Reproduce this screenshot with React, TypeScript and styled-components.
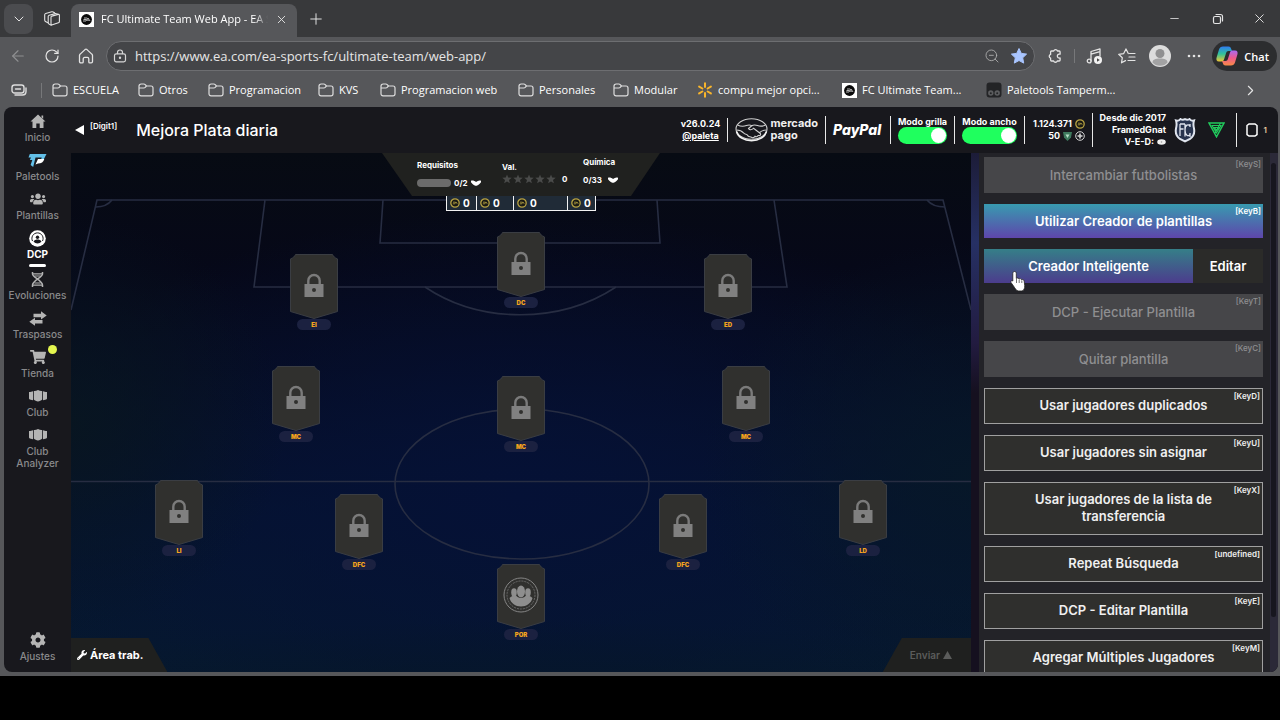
import React from "react";
import styled, { createGlobalStyle, css } from "styled-components";
import { FaCog, FaShoppingCart, FaUsers, FaWrench } from "react-icons/fa";
import {
  ArrowLeft,
  ChevronDown,
  ChevronRight,
  Minus,
  Plus,
  RotateCw,
  X,
  ZoomOut,
} from "lucide-react";

const chromeFont = '"Open Sans", "Noto Sans", sans-serif';
const appFont = 'Inter, "Liberation Sans", sans-serif';

const GlobalStyle = createGlobalStyle`
  *, *::before, *::after { box-sizing: border-box; }
  html, body { margin: 0; background: #000; }
  button, input { font: inherit; color: inherit; }
  button { border: 0; padding: 0; background: none; cursor: pointer; }
  a { color: inherit; text-decoration: none; }
  svg { display: block; flex: none; }
`;

const Screen = styled.div`
  height: 100vh;
  padding-bottom: 44px;
  background: #000;
  color: #fff;
`;

const Browser = styled.div`
  display: flex;
  flex-direction: column;
  height: 100%;
  background: #56575a;
  font-family: ${chromeFont};
  font-size: 11px;
  font-weight: 500;
`;

/* ---------- Browser chrome ---------- */

const TabStrip = styled.div`
  display: flex;
  align-items: center;
  flex: none;
  height: 37px;
  padding-left: 4px;
  background: #38393b;
`;

const IconButton = styled.button<{ $w?: number }>`
  display: flex;
  align-items: center;
  justify-content: center;
  flex: none;
  width: ${(p) => p.$w ?? 34}px;
  height: 30px;
  color: #e4e4e4;
  &:disabled { opacity: 0.4; }
`;

const TabMenuButton = styled(IconButton)`
  border-radius: 8px;
  background: #4b4c4f;
`;

const Tab = styled.div`
  display: flex;
  align-items: center;
  gap: 7px;
  align-self: flex-end;
  width: 226px;
  height: 33px;
  padding: 0 10px 3px 8px;
  border-radius: 8px 8px 0 0;
  background: #56575a;
`;

const TabTitle = styled.span`
  flex: 1;
  overflow: hidden;
  white-space: nowrap;
  line-height: 16px;
  mask-image: linear-gradient(90deg, #000 92%, transparent);
`;

const WindowControls = styled.div`
  display: flex;
  margin-left: auto;
`;

const Toolbar = styled.div`
  display: flex;
  align-items: center;
  flex: none;
  height: 38px;
  padding: 0 3px 0 1px;
`;

const AddressBar = styled.label`
  display: flex;
  align-items: center;
  flex: 1;
  height: 30px;
  margin: 0 1px 0 3px;
  padding: 0 2px 0 6px;
  border: 1px solid #6d6e71;
  border-radius: 15px;
  background: #444548;
`;

const AddressInput = styled.input`
  flex: 1;
  min-width: 0;
  padding: 0 0 0 8px;
  border: 0;
  outline: 0;
  background: none;
  color: #e6e6e6;
  font-size: 13px;
  font-weight: 400;
  line-height: 20px;
`;

const ThinDivider = styled.span<{ $h: number }>`
  flex: none;
  width: 1px;
  height: ${(p) => p.$h}px;
  background: #77787a;
`;

const BookmarkDivider = styled(ThinDivider)`
  margin: 0 10px 0 14px;
`;

const ChatButton = styled.button`
  display: flex;
  align-items: center;
  gap: 6px;
  height: 30px;
  margin-left: 3px;
  padding: 0 8px 0 4px;
  border-radius: 15px;
  background: #2c2d2f;
  font-weight: 600;
`;

const Bookmarks = styled.nav`
  display: flex;
  align-items: center;
  flex: none;
  height: 32px;
  padding: 0 21px 2px 11px;
`;

const Bookmark = styled.a<{ $w: number }>`
  display: flex;
  align-items: center;
  gap: 5px;
  flex: none;
  width: ${(p) => p.$w}px;
  white-space: nowrap;
  line-height: 16px;
`;

const MoreBookmarks = styled(IconButton)`
  margin-left: auto;
`;

/* ---------- App shell ---------- */

const WebApp = styled.div`
  display: flex;
  flex: 1;
  min-height: 0;
  margin: 0 2px 4px 4px;
  border-radius: 8px;
  overflow: hidden;
  background: #18181d;
  font-family: ${appFont};
`;

const Sidebar = styled.nav`
  display: flex;
  flex-direction: column;
  flex: none;
  width: 67px;
  padding: 4px 0 10px;
`;

const NavItem = styled.a<{ $active?: boolean; $last?: boolean }>`
  position: relative;
  display: flex;
  flex-direction: column;
  align-items: center;
  padding: 0 5px 7px;
  color: #8a8a8c;
  font-size: 10px;
  line-height: 12px;
  text-align: center;
  ${(p) => p.$last && css`margin-top: auto; padding-bottom: 0;`}
  ${(p) => p.$active && css`color: #fff; font-weight: 700; padding-bottom: 2px;`}
`;

const NavIcon = styled.span`
  display: grid;
  place-items: center;
  height: 20px;
  color: #b4b4b4;
`;

const ActiveBar = styled.span`
  width: 17px;
  height: 3px;
  margin-top: 4px;
  border-radius: 2px;
  background: #fff;
`;

const Dot = styled.span`
  position: absolute;
  top: -2px;
  right: 14px;
  width: 9px;
  height: 9px;
  border-radius: 50%;
  background: #e4f64f;
`;

const Main = styled.main`
  display: flex;
  flex-direction: column;
  flex: 1;
  min-width: 0;
`;

const Header = styled.header`
  display: flex;
  align-items: center;
  flex: none;
  height: 46px;
  padding-left: 4px;
`;

const BackButton = styled.button`
  display: flex;
  align-items: center;
  gap: 6px;
`;

const KeyHint = styled.span`
  font-size: 8px;
  line-height: 10px;
`;

const BackHint = styled(KeyHint)`
  padding-bottom: 8px;
  font-weight: 600;
`;

const Title = styled.h1`
  margin: 0 0 0 19px;
  padding-bottom: 1px;
  font-size: 16px;
  line-height: 20px;
  font-weight: 500;
`;

const HeaderInfo = styled.div`
  display: flex;
  align-items: center;
  gap: 7px;
  margin-left: auto;
`;

const Rule = styled.span<{ $h?: number }>`
  width: 1px;
  height: ${(p) => p.$h ?? 28}px;
  background: #e8e8e8;
`;

const InfoText = styled.div<{ $w: number; $align?: string }>`
  width: ${(p) => p.$w}px;
  white-space: nowrap;
  display: flex;
  flex-direction: column;
  align-items: ${(p) => p.$align ?? "center"};
  font-size: 9px;
  line-height: 12px;
  font-weight: 700;
  a { text-decoration: underline; }
`;

const Inline = styled.span`
  display: flex;
  align-items: center;
  gap: 3px;
`;

const ToggleLabel = styled.label<{ $w: number }>`
  display: flex;
  flex-direction: column;
  align-items: center;
  width: ${(p) => p.$w}px;
  white-space: nowrap;
  font-size: 9px;
  line-height: 11px;
  font-weight: 700;
`;

const Toggle = styled.input`
  appearance: none;
  width: 100%;
  height: 17px;
  margin: 0;
  padding: 1px;
  border-radius: 9px;
  background: #1fff5e;
  &::before {
    content: "";
    display: block;
    width: 15px;
    height: 15px;
    margin-left: auto;
    border-radius: 50%;
    background: #fff;
  }
`;

const MercadoText = styled.span`
  display: flex;
  flex-direction: column;
  padding-bottom: 3px;
  font-size: 11px;
  line-height: 12px;
  font-weight: 700;
  color: #f0f0f0;
`;

const PayPalText = styled.span`
  width: 50px;
  font-size: 14px;
  line-height: 16px;
  font-weight: 800;
  font-style: italic;
`;

const Badges = styled.div`
  display: flex;
  align-items: center;
  gap: 12px;
  padding: 0 4px 0 1px;
`;

const Unassigned = styled.button`
  display: flex;
  align-items: center;
  justify-content: flex-end;
  gap: 6px;
  width: 23px;
  margin-right: 11px;
  font-size: 8px;
  font-weight: 600;
  color: #e8c9a0;
`;

const Body = styled.div`
  display: flex;
  flex: 1;
  min-height: 0;
`;

/* ---------- Pitch ---------- */

const Pitch = styled.section`
  position: relative;
  flex: 1;
  min-width: 0;
  overflow: hidden;
  background:
    radial-gradient(ellipse 30% 45% at 100% 62%, rgba(7, 24, 40, 0.9), transparent),
    radial-gradient(ellipse 24% 40% at 0% 52%, rgba(8, 22, 32, 0.9), transparent),
    radial-gradient(ellipse 70% 22% at 50% 112%, rgba(6, 22, 36, 0.9), transparent),
    radial-gradient(ellipse 60% 55% at 50% 66%, #051136, transparent),
    linear-gradient(180deg, #070b13 0%, #060818 22%, #060b20 42%, #051430 70%, #06192f 100%);
`;

const PitchLines = styled.svg`
  position: absolute;
  inset: 0;
  width: 100%;
  height: 100%;
`;

const Overlay = styled.div`
  position: relative;
  display: flex;
  flex-direction: column;
  align-items: center;
`;

const Requirements = styled.div`
  display: flex;
  gap: 19px;
  width: 278px;
  height: 43px;
  padding: 4px 0 0 35px;
  background: #20211f;
  clip-path: polygon(0 0, 100% 0, 249px 100%, 30px 100%);
  font-size: 8px;
  line-height: 10px;
  font-weight: 700;
`;

const Requirement = styled.div<{ $drop: number; $w: number; $gap?: number }>`
  display: flex;
  flex-direction: column;
  gap: ${(p) => p.$gap ?? 8}px;
  width: ${(p) => p.$w}px;
  padding-top: ${(p) => p.$drop}px;
  white-space: nowrap;
`;

const Progress = styled.span`
  width: 34px;
  height: 8px;
  border-radius: 4px;
  background: #6b6b6b;
`;

const Stars = styled.span`
  display: flex;
  gap: 1px;
  margin-right: 3px;
  color: #4a4b4a;
`;

const ChemistryValue = styled(Inline)`
  gap: 6px;
`;

const Prices = styled.div`
  display: flex;
  border: 1px solid #f2f2f2;
  border-top: 0;
  background: #202b37;
`;

const Price = styled.span<{ $w: number }>`
  display: flex;
  align-items: center;
  gap: 3px;
  width: ${(p) => p.$w}px;
  height: 14px;
  padding-left: 3px;
  font-size: 10px;
  line-height: 12px;
  font-weight: 700;
  & + & { border-left: 1px solid #f2f2f2; }
`;

const Slot = styled.button<{ $x: number; $y: number }>`
  position: absolute;
  left: ${(p) => p.$x}%;
  top: ${(p) => p.$y}%;
  display: flex;
  flex-direction: column;
  align-items: center;
  width: 48px;
  margin-left: -24px;
`;

const Position = styled.span`
  width: 34px;
  height: 11px;
  border-radius: 6px;
  background: #1b2140;
  color: #f5a51d;
  font-size: 6px;
  line-height: 11px;
  font-weight: 900;
  text-align: center;
`;

const Corner = styled.button<{ $side: "left" | "right" }>`
  position: absolute;
  bottom: 0;
  ${(p) => p.$side}: 0;
  display: flex;
  align-items: center;
  gap: 3px;
  height: 34px;
  background: #1f201f;
  white-space: nowrap;
  ${(p) =>
    p.$side === "left"
      ? css`
          padding: 0 24px 0 6px;
          clip-path: polygon(0 0, calc(100% - 19px) 0, 100% 100%, 0 100%);
          font-size: 11px;
          font-weight: 700;
        `
      : css`
          padding: 0 19px 0 27px;
          clip-path: polygon(19px 0, 100% 0, 100% 100%, 0 100%);
          color: #5b5c5b;
          font-size: 10px;
          font-weight: 600;
        `}
`;

/* ---------- Action panel ---------- */

const Panel = styled.aside`
  display: flex;
  flex: none;
  width: 307px;
  background: #232328;
`;

const PanelEdge = styled.span`
  width: 8px;
  background: linear-gradient(180deg, #1c1c38 0, #263064 90px, #221b40 190px, #15101f 240px);
`;

const Actions = styled.div`
  display: flex;
  flex-direction: column;
  flex: 1;
  gap: 11px;
  overflow: hidden;
  padding: 4px 7px 0 5px;
`;

const Action = styled.button<{ $kind: "disabled" | "primary" | "plain" }>`
  position: relative;
  flex: none;
  width: 100%;
  padding: 8px 40px 9px;
  font-size: 13px;
  line-height: 17px;
  font-weight: 600;
  text-align: center;
  ${(p) =>
    p.$kind === "disabled" &&
    css`
      padding: 10px 40px 9px;
      background: #464649;
      color: #8f8f91;
      font-weight: 500;
    `}
  ${(p) =>
    p.$kind === "primary" &&
    css`
      padding: 9px 40px 8px;
      background: linear-gradient(180deg, #389bb0, #5e46ab);
    `}
  ${(p) =>
    p.$kind === "plain" &&
    css`
      border: 1px solid #a0a0a0;
      background: #2f2f2d;
      color: #f0f0f0;
    `}
`;

const ActionHint = styled(KeyHint)`
  position: absolute;
  top: 2px;
  right: 2px;
`;

const SplitRow = styled.div`
  display: flex;
  flex: none;
`;

const SmartBuilder = styled(Action)`
  flex: 1;
  width: auto;
  padding-left: 0;
  padding-right: 0;
  background: linear-gradient(180deg, #357f88, #4c3c8d);
`;

const EditButton = styled(SmartBuilder)`
  flex: none;
  width: 70px;
  background: #2b2b29;
`;

const Cursor = styled.svg`
  position: absolute;
  left: 26px;
  top: 21px;
  z-index: 1;
`;

const ScrollRail = styled.span`
  width: 8px;
  padding: 10px 2px 55px 1px;
  background: #2b2938;
  &::before {
    content: "";
    display: block;
    height: 100%;
    border-radius: 3px;
    background: #17161f;
  }
`;

/* ---------- Icons ---------- */

const stroke = {
  fill: "none",
  stroke: "currentColor",
  strokeLinecap: "round" as const,
  strokeLinejoin: "round" as const,
};

const Folder = () => (
  <svg width="16" height="16" viewBox="0 0 16 16" {...stroke} stroke="#dedede" strokeWidth="1.2">
    <path d="M1 4.2C1 2.8 1.8 2 3.200 2h2.600c.6 0 1 .2 1.400.6L8.500 4H13c1.300 0 2 .8 2 2v5.700c0 1.300-.8 2.100-2.100 2.100H3.100C1.800 13.800 1 13 1 11.700zM1 6h4.800c.6 0 1-.2 1.400-.6L8.500 4" />
  </svg>
);

const EaIcon = () => (
  <svg width="15" height="15" viewBox="0 0 15 15">
    <rect width="15" height="15" fill="#fff" />
    <circle cx="7.500" cy="7.500" r="5.400" fill="#0a0a0a" />
    <path d="M5 6h3.200M4.500 7.500h3M4 9h3l2-3 2 3M8 8.200h2" stroke="#fff" strokeWidth=".7" fill="none" />
  </svg>
);

const Spark = () => (
  <svg width="16" height="16" viewBox="0 0 16 16" stroke="#f8b52c" strokeWidth="2" strokeLinecap="round">
    <path d="M8 1.200v3.800M8 11v3.800M2.100 4.600l3.300 1.900M10.600 9.500l3.300 1.900M2.100 11.400l3.300-1.900M10.600 6.500l3.300-1.900" />
  </svg>
);

const Tampermonkey = () => (
  <svg width="16" height="16" viewBox="0 0 16 16">
    <rect x=".5" y=".5" width="15" height="15" rx="3" fill="#232426" />
    <circle cx="4.800" cy="11" r="2.700" fill="#5c5d5f" />
    <circle cx="11.200" cy="11" r="2.700" fill="#5c5d5f" />
    <circle cx="4.800" cy="11.200" r="1" fill="#232426" />
    <circle cx="11.200" cy="11.200" r="1" fill="#232426" />
  </svg>
);

const WorkspacesIcon = () => (
  <svg width="18" height="18" viewBox="0 0 18 18" {...stroke} strokeWidth="1.100">
    <path d="M8 7.200c0-.6.300-.9.900-1.100l6.200-1.700c.8-.2 1.300.2 1.300.9v6.200c0 .7-.4 1.100-1 1.300l-6 2c-.9.3-1.400-.1-1.400-.9z" />
    <path d="M8.200 15.200 6 14c-.6-.4-.8-.8-.8-1.500V6.600c0-.7.3-1.100 1-1.300l6-1.700c.5-.1.900-.1 1.300.1l1.500.6" />
    <path d="m4.800 12.700-2.300-1.200c-.6-.3-.8-.8-.8-1.400V4.800c0-.7.300-1.100 1-1.300l6.100-1.700c.5-.1.900-.1 1.300.1l1.500.8" />
  </svg>
);

const HomeOutline = () => (
  <svg width="18" height="18" viewBox="0 0 18 18" {...stroke} strokeWidth="1.300">
    <path d="M2.500 8.600c0-.7.2-1.100.7-1.500L8 2.600c.6-.5 1.400-.5 2 0l4.800 4.500c.5.4.7.8.7 1.500v6c0 .8-.5 1.300-1.300 1.300h-1.400c-.6 0-1-.4-1-1V12c0-1-.6-1.600-1.500-1.600H7.700c-.9 0-1.500.6-1.500 1.600v2.900c0 .6-.4 1-1 1H3.800c-.8 0-1.300-.5-1.300-1.300z" />
  </svg>
);

const LockOutline = () => (
  <svg width="14" height="14" viewBox="0 0 14 14" {...stroke} stroke="#d6d6d6" strokeWidth="1.200">
    <rect x="1.500" y="4.800" width="11" height="8" rx="1.800" />
    <path d="M4.500 4.600V3.500a2.500 2.500 0 0 1 5 0v1.100" />
    <circle cx="7" cy="8.800" r=".6" fill="currentColor" />
  </svg>
);

const BlueStar = () => (
  <svg width="18" height="18" viewBox="0 0 18 18">
    <path d="m9 1.500 2.300 4.900 5.300.7-3.900 3.700 1 5.300L9 13.500l-4.700 2.600 1-5.300-3.900-3.700 5.300-.7z" fill="#a9c5ff" stroke="#a9c5ff" strokeLinejoin="round" />
  </svg>
);

const PuzzleIcon = () => (
  <svg width="16" height="16" viewBox="0 0 16 16" {...stroke} strokeWidth="1.300">
    <path d="M4.500 3h2.200a2 2 0 0 1 3.800 0h1.700c.6 0 .9.300.9.900v2.300a2 2 0 1 0 0 3.700v2.200c0 .6-.3.900-.9.900h-1.900a2 2 0 0 1-3.700 0H4.500c-.6 0-.9-.3-.9-.9v-1.900a2 2 0 0 1 0-3.800V3.900c0-.6.300-.9.900-.9z" />
  </svg>
);

const MusicIcon = () => (
  <svg width="17" height="18" viewBox="0 0 17 18" {...stroke} strokeWidth="1.300">
    <path d="M5 14V4.500l9-2.600V9M5 7.200l9-2.600" />
    <circle cx="3.200" cy="14" r="1.900" />
    <circle cx="12" cy="13" r="4" fill="#f2f2f2" stroke="none" />
    <path d="m11 11.200 2.800 1.800-2.800 1.800z" fill="#444" stroke="none" />
  </svg>
);

const FavoritesIcon = () => (
  <svg width="18" height="18" viewBox="0 0 18 18" {...stroke} strokeWidth="1.200">
    <path d="M10.300 6.500 8 1.900 5.700 6.600l-5 .7 3.600 3.500-.8 5 4-2.200M11.500 6.500H17M11 10h6M10 13.500h7" />
  </svg>
);

const Avatar = () => (
  <svg width="22" height="22" viewBox="0 0 22 22">
    <circle cx="11" cy="11" r="11" fill="#dcdcdc" />
    <circle cx="11" cy="8.500" r="4.500" fill="#909091" />
    <path d="M3.500 17.500c0-3 2.800-4 7.500-4s7.500 1 7.500 4c-1.500 2-4.500 3.300-7.500 3.300s-6-1.300-7.500-3.300z" fill="#a2a2a3" />
  </svg>
);

const CopilotIcon = () => (
  <svg width="22" height="20" viewBox="0 0 22 20">
    <defs>
      <linearGradient id="cpA" x1="0" y1="0" x2="0" y2="1">
        <stop offset="0" stopColor="#2f7df0" />
        <stop offset=".5" stopColor="#30c39a" />
        <stop offset="1" stopColor="#f2c733" />
      </linearGradient>
      <linearGradient id="cpB" x1="0" y1="0" x2="0" y2="1">
        <stop offset="0" stopColor="#a96af2" />
        <stop offset=".5" stopColor="#ef5a8d" />
        <stop offset="1" stopColor="#f78b45" />
      </linearGradient>
    </defs>
    <path d="M7 .5h5.500c1.800 0 2.200 1 2.700 2.500L16 5h-3.500c-1.400 0-2 .8-2.400 2L8 13.500c-.4 1.300-1 2-2.500 2H3c-2.500 0-3-2-2.400-4L3 3.500C3.600 1.500 5 .5 7 .5z" fill="url(#cpA)" />
    <path d="M15 19.500H9.500c-1.800 0-2.200-1-2.700-2.500L6 15h3.500c1.400 0 2-.8 2.400-2L14 6.500c.4-1.300 1-2 2.500-2H19c2.500 0 3 2 2.400 4L19 16.500c-.6 2-2 3-4 3z" fill="url(#cpB)" />
  </svg>
);

const SplitScreenIcon = () => (
  <svg width="16" height="14" viewBox="0 0 16 14" {...stroke} stroke="#dedede" strokeWidth="1.400">
    <rect x="1" y="2" width="12" height="8" rx="2.500" />
    <path d="M4.500 6h5M4 12h7.500c2.200 0 3.500-1.300 3.500-3.500V5" />
  </svg>
);

const RestoreIcon = () => (
  <svg width="12" height="12" viewBox="0 0 12 12" {...stroke} strokeWidth="1.200">
    <rect x="1.500" y="3.500" width="7" height="7" rx="1.500" />
    <path d="M4 1.500h4.500a2 2 0 0 1 2 2V8" />
  </svg>
);

const HomeSolid = () => (
  <svg width="16" height="15" viewBox="0 0 16 15" fill="currentColor">
    <path d="M8 .5 15.500 7.500h-2V14H9.700V9.500H6.300V14H2.500V7.500h-2l7.500-7zM11.500 1.500h1.700v3.200l-1.700-1.500z" />
  </svg>
);

const PaletoolsIcon = () => (
  <svg width="19" height="15" viewBox="0 0 19 15">
    <path d="M1.800 1H18.500l-2.300 4.400c-.8 1.300-2 2-3.500 2l1-2.800H7.500L5.200 14 2.600 12l1.700-5H1.800L3 4.500H.5z" fill="#62bfe8" />
    <path d="M7.500 11.500 10 6h6.300c-.8 3-3 4.500-6.300 4.500z" fill="#fff" />
  </svg>
);

const DcpIcon = () => (
  <svg width="17" height="17" viewBox="0 0 17 17">
    <circle cx="8.500" cy="8.500" r="8.300" fill="#fff" />
    <path d="M3.500 11a5.600 5.600 0 1 1 10 0" fill="none" stroke="#18181d" strokeWidth="1" />
    <circle cx="8.500" cy="7.200" r="1.700" fill="#18181d" />
    <path d="M4.500 11.500c1-1.500 2.500-2 4-2s3 .5 4 2c-1 1.300-2.500 2-4 2s-3-.7-4-2z" fill="#18181d" />
  </svg>
);

const EvolutionIcon = () => (
  <svg width="13" height="15" viewBox="0 0 13 15" fill="none" stroke="currentColor" strokeWidth="1.500">
    <path d="M1.500 0v2c0 3 10 7 10 11v2M11.500 0v2c0 3-10 7-10 11v2" />
    <path d="M2 1.800h9M3.500 4h6M3.500 11h6M2 13.200h9" strokeWidth="1.200" />
  </svg>
);

const TransferIcon = () => (
  <svg width="18" height="15" viewBox="0 0 18 15" fill="currentColor">
    <path d="M4.500 2.800H12V.2l5.700 4.300L12 8.600V6.300H4.500zM13.500 8.900v3.500H6v2.400L.3 10.700 6 6.800v2.100z" />
  </svg>
);

const ClubIcon = () => (
  <svg width="18" height="12" viewBox="0 0 18 12" fill="currentColor">
    <path d="M4.800 1c1.300.2 2.700-.2 4.200-1 1.500.8 2.900 1.200 4.200 1v8.500c-1 1-2.700 1.700-4.200 2-1.500-.3-3.200-1-4.200-2z" />
    <path d="M0 2c1.500 0 3-.4 4-.8v9L.8 9.500C.3 9.300 0 9 0 8.500zM18 2c-1.500 0-3-.4-4-.8v9l3.200-.7c.5-.2.8-.5.8-1z" />
  </svg>
);

const MercadoPagoIcon = () => (
  <svg width="33" height="24" viewBox="0 0 33 24" fill="none" stroke="#cfcfcf" strokeWidth="1.100">
    <ellipse cx="16.500" cy="11" rx="15.500" ry="10.200" />
    <path d="M1.500 13.500c1.500 5.500 7.500 9.200 15 9.200s13.500-3.700 15-9.200" stroke="#f2f2f2" strokeWidth="1.600" />
    <path d="M2.500 7c3 1.500 6.500 1.500 9 .5 2-.8 3.500-.8 5.500.2M30.500 7c-3 1.500-5.500 1.500-8 .5-3-1-4-1-6 .5l-3 2.500c1 1.800 3 1.500 5-.2l6.500 5c1.500 1.200 0 3-1.800 2M1.500 12c4 0 5.500 1 7 2.800 1 1.800 3.500 1.200 4 2.500.8 2 3 1 4 2 1.500 1 3 0 3.500-1 1.500 1 3 .2 3.200-1.300M31.500 12c-3 0-5 .8-6.800 2.500" />
  </svg>
);

const Coin = () => (
  <svg width="10" height="10" viewBox="0 0 10 10" fill="none" stroke="#b8a343">
    <circle cx="5" cy="5" r="4.200" strokeWidth="1.300" fill="#1a1a14" />
    <path d="M3 4.200h2.500M2.800 5.800h2l1.200-1.800 1.200 1.800" strokeWidth=".8" />
  </svg>
);

const PointsIcon = () => (
  <svg width="9" height="9" viewBox="0 0 9 9">
    <path d="M0 0h9L8 5.500 4.500 9 1 5.500z" fill="#3e7a5e" />
    <path d="M2.500 2.500h4L4.500 6z" fill="#b7e0c8" />
  </svg>
);

const PlusCoin = () => (
  <svg width="10" height="10" viewBox="0 0 10 10" fill="none" stroke="#d6d6d6">
    <circle cx="5" cy="5" r="4.300" />
    <path d="M5 2.500v5M2.500 5h5" strokeWidth="1.600" />
  </svg>
);

const EyeIcon = () => (
  <svg width="9" height="6" viewBox="0 0 9 6">
    <ellipse cx="4.500" cy="3" rx="4.300" ry="2.700" fill="#f0f0f0" />
    <circle cx="4.500" cy="3" r=".8" fill="#999" />
  </svg>
);

const Crest = () => (
  <svg width="22" height="25" viewBox="0 0 22 25" fill="none" stroke="#dfe4ee">
    <path d="M2 2.500c2 .5 3.500 0 4.500-1.500C8 2 9.500 2 11 1.200 12.500 2 14 2 15.500 1c1 1.500 2.500 2 4.500 1.500-.8 2.500-.8 5 0 8 .8 4-.5 8-4 10.500L11 23.500 6 21c-3.500-2.500-4.800-6.500-4-10.500.8-3 .8-5.500 0-8z" fill="#28344f" strokeWidth="2" />
    <path d="M6 6v12M6 6h5M6 11h3.500M16 8c-1.500-2-5-1.500-5 4s3.500 7 5 4.500M11 6v12.500M16 6v3M16 15v4" strokeWidth="1.300" />
  </svg>
);

const GreenTriangle = () => (
  <svg width="17" height="16" viewBox="0 0 17 16" fill="none" stroke="#21c95c" strokeWidth="1.500">
    <path d="M1 1h15L8.500 14.800z" />
    <path d="M4 3.500h9L8.500 11zM6.500 5.500h4L8.500 8.500zM12.500 1 7 11" strokeWidth="1.100" />
  </svg>
);

const Caret = () => (
  <svg width="10" height="6" viewBox="0 0 10 6" fill="#fff">
    <path d="M0 .8C1.800.2 3.400.8 5 2 6.600.8 8.200.2 10 .8v1.400C8.600 4 7.200 5 5.600 5.800H4.400C2.800 5 1.400 4 0 2.200z" />
  </svg>
);

const Star = () => (
  <svg width="10" height="10" viewBox="0 0 10 10" fill="currentColor">
    <path d="m5 .4 1.200 3.200 3.500.2-2.700 2.100.9 3.400L5 7.400 2.100 9.300 3 5.900.3 3.800l3.500-.2z" />
  </svg>
);

const SlotCard = ({ open }: { open?: boolean }) => (
  <svg width="48" height="65" viewBox="0 0 48 65">
    <path
      d="M5.500.5h37c.8 1.800 2.200 3.400 5 4.400v52.600L24 64.500.5 57.500V4.900c2.800-1 4.200-2.600 5-4.400z"
      fill="#30302e"
      stroke="#3a3d43"
    />
    {open ? (
      <g>
        <circle cx="24" cy="31" r="17" fill="none" stroke="#858585" />
        <circle cx="24" cy="31" r="14" fill="none" stroke="#6a6a6a" strokeDasharray="2 1" />
        <path d="M12.500 34c1.500 5.500 6 8.500 11.500 8.500s10-3 11.500-8.500c-2-2-4-2.500-6-3-1.500 2-3.500 3-5.500 3s-4-1-5.500-3c-2 .5-4 1-6 3z" fill="#8e8e8e" />
        <ellipse cx="24" cy="27.500" rx="4" ry="6" fill="#8e8e8e" />
        <ellipse cx="17" cy="28.500" rx="2.800" ry="4.200" fill="#8e8e8e" />
        <ellipse cx="31" cy="28.500" rx="2.800" ry="4.200" fill="#8e8e8e" />
      </g>
    ) : (
      <g>
        <path d="M18.300 31v-4.300a5.700 5.700 0 0 1 11.400 0V31" fill="none" stroke="#7b7b7b" strokeWidth="2.400" />
        <rect x="14.500" y="30" width="19" height="13" fill="#808080" />
        <circle cx="24" cy="36" r="2" fill="#30302e" />
      </g>
    )}
  </svg>
);

const HandCursor = () => (
  <Cursor width="17" height="22" viewBox="0 0 17 22">
    <path
      d="M4.500 1.500c1.200 0 1.800.8 1.800 2v5c.8-.8 2.300-.6 2.700.5.900-.7 2.300-.4 2.600.7 1-.6 2.400 0 2.600 1.300l.5 4.500c.2 2.500-.7 5-2.700 5.500H8c-2-.5-3-3-4.500-5L1 12.500c-.8-1.300.8-2.500 1.800-1.500V3.500c0-1.200.6-2 1.700-2z"
      fill="#fff"
      stroke="#222"
      strokeWidth=".8"
    />
    <path d="M6.500 9v4M9.200 9.500v3.500M11.800 10.500V13" stroke="#333" strokeWidth=".7" />
  </Cursor>
);

/* ---------- Data ---------- */

const bookmarks = [
  { label: "ESCUELA", w: 86, icon: <Folder /> },
  { label: "Otros", w: 70, icon: <Folder /> },
  { label: "Programacion", w: 110, icon: <Folder /> },
  { label: "KVS", w: 62, icon: <Folder /> },
  { label: "Programacion web", w: 138, icon: <Folder /> },
  { label: "Personales", w: 95, icon: <Folder /> },
  { label: "Modular", w: 84, icon: <Folder /> },
  { label: "compu mejor opci...", w: 145, icon: <Spark /> },
  { label: "FC Ultimate Team...", w: 144, icon: <EaIcon /> },
  { label: "Paletools Tamperm...", w: 130, icon: <Tampermonkey /> },
];

const navItems = [
  { label: "Inicio", icon: <HomeSolid /> },
  { label: "Paletools", icon: <PaletoolsIcon /> },
  { label: "Plantillas", icon: <FaUsers size={16} /> },
  { label: "DCP", icon: <DcpIcon />, active: true },
  { label: "Evoluciones", icon: <EvolutionIcon /> },
  { label: "Traspasos", icon: <TransferIcon /> },
  { label: "Tienda", icon: <FaShoppingCart size={16} />, dot: true },
  { label: "Club", icon: <ClubIcon /> },
  { label: "Club Analyzer", icon: <ClubIcon /> },
];

const slots = [
  { pos: "DC", x: 50, y: 15.2 },
  { pos: "EI", x: 27, y: 19.5 },
  { pos: "ED", x: 73, y: 19.5 },
  { pos: "MC", x: 25, y: 41 },
  { pos: "MC", x: 50, y: 43 },
  { pos: "MC", x: 75, y: 41 },
  { pos: "LI", x: 12, y: 63 },
  { pos: "DFC", x: 32, y: 65.7 },
  { pos: "DFC", x: 68, y: 65.7 },
  { pos: "LD", x: 88, y: 63 },
  { pos: "POR", x: 50, y: 79.1, open: true },
];

const plainActions = [
  { label: "Usar jugadores duplicados", hint: "[KeyD]" },
  { label: "Usar jugadores sin asignar", hint: "[KeyU]" },
  { label: "Usar jugadores de la lista de transferencia", hint: "[KeyX]" },
  { label: "Repeat Búsqueda", hint: "[undefined]" },
  { label: "DCP - Editar Plantilla", hint: "[KeyE]" },
  { label: "Agregar Múltiples Jugadores", hint: "[KeyM]" },
];

/* ---------- Sections ---------- */

const Chrome = () => (
  <>
    <TabStrip>
      <TabMenuButton $w={29} aria-label="Tab actions"><ChevronDown size={16} strokeWidth={1.5} /></TabMenuButton>
      <IconButton $w={38} aria-label="Workspaces"><WorkspacesIcon /></IconButton>
      <Tab>
        <EaIcon />
        <TabTitle>FC Ultimate Team Web App - EA SPORTS</TabTitle>
        <IconButton $w={12} aria-label="Close tab"><X size={13} strokeWidth={1.7} /></IconButton>
      </Tab>
      <IconButton $w={37} aria-label="New tab"><Plus size={18} strokeWidth={1.3} /></IconButton>
      <WindowControls>
        <IconButton $w={43} aria-label="Minimize"><Minus size={13} strokeWidth={1.5} /></IconButton>
        <IconButton $w={43} aria-label="Restore"><RestoreIcon /></IconButton>
        <IconButton $w={41} aria-label="Close"><X size={15} strokeWidth={1.5} /></IconButton>
      </WindowControls>
    </TabStrip>
    <Toolbar>
      <IconButton aria-label="Back" disabled><ArrowLeft size={18} strokeWidth={1.5} /></IconButton>
      <IconButton aria-label="Refresh"><RotateCw size={16} strokeWidth={1.8} /></IconButton>
      <IconButton aria-label="Home"><HomeOutline /></IconButton>
      <AddressBar>
        <LockOutline />
        <AddressInput aria-label="Address" defaultValue="https://www.ea.com/ea-sports-fc/ultimate-team/web-app/" />
        <IconButton $w={28} aria-label="Zoom"><ZoomOut size={16} strokeWidth={1.3} color="#b0b0b0" /></IconButton>
        <IconButton $w={26} aria-label="Favorite"><BlueStar /></IconButton>
      </AddressBar>
      <IconButton $w={38} aria-label="Extensions"><PuzzleIcon /></IconButton>
      <ThinDivider $h={14} />
      <IconButton $w={38} aria-label="Music"><MusicIcon /></IconButton>
      <IconButton $w={28} aria-label="Favorites"><FavoritesIcon /></IconButton>
      <IconButton $w={38} aria-label="Profile"><Avatar /></IconButton>
      <IconButton $w={30} aria-label="More">
        <svg width="14" height="4" viewBox="0 0 14 4" fill="currentColor">
          <circle cx="2" cy="2" r="1.300" /><circle cx="7" cy="2" r="1.300" /><circle cx="12" cy="2" r="1.300" />
        </svg>
      </IconButton>
      <ChatButton><CopilotIcon />Chat</ChatButton>
    </Toolbar>
    <Bookmarks>
      <SplitScreenIcon />
      <BookmarkDivider $h={15} />
      {bookmarks.map((b) => (
        <Bookmark key={b.label} href="#" $w={b.w}>{b.icon}{b.label}</Bookmark>
      ))}
      <MoreBookmarks $w={17} aria-label="More bookmarks"><ChevronRight size={17} strokeWidth={1.6} /></MoreBookmarks>
    </Bookmarks>
  </>
);

const TopBar = () => (
  <Header>
    <BackButton>
      <svg width="9" height="10" viewBox="0 0 9 10" fill="#fff"><path d="M0 5 9 0v10z" /></svg>
      <BackHint>[Digit1]</BackHint>
    </BackButton>
    <Title>Mejora Plata diaria</Title>
    <HeaderInfo>
      <InfoText $w={38}><span>v26.0.24</span><a href="#">@paleta</a></InfoText>
      <Rule $h={24} />
      <Inline><MercadoPagoIcon /><MercadoText><span>mercado</span><span>pago</span></MercadoText></Inline>
      <Rule />
      <PayPalText>PayPal</PayPalText>
      <Rule />
      <ToggleLabel $w={49}>Modo grilla<Toggle type="checkbox" defaultChecked /></ToggleLabel>
      <Rule />
      <ToggleLabel $w={55}>Modo ancho<Toggle type="checkbox" defaultChecked /></ToggleLabel>
      <Rule />
      <InfoText $w={53} $align="flex-end">
        <Inline>1.124.371 <Coin /></Inline>
        <Inline>50 <PointsIcon /><PlusCoin /></Inline>
      </InfoText>
      <Rule $h={34} />
      <InfoText $w={66} $align="flex-end">
        <span>Desde dic 2017</span><span>FramedGnat</span><Inline>V-E-D: <EyeIcon /></Inline>
      </InfoText>
      <Badges><Crest /><GreenTriangle /></Badges>
      <Rule $h={34} />
      <Unassigned>
        <svg width="12" height="14" viewBox="0 0 12 14" fill="none" stroke="#fff" strokeWidth="1.500">
          <path d="M3 1h6l2 1.500v9L9 13H3l-2-1.500v-9z" />
        </svg>
        1
      </Unassigned>
    </HeaderInfo>
  </Header>
);

const PitchView = () => (
  <Pitch>
    <PitchLines viewBox="0 0 900 519" preserveAspectRatio="none" fill="none" stroke="#272d42" strokeWidth="1.600">
      <path d="M0 157 26 47h846l28 110M194 47l-11 87h533l-13-87M312 47l-3 43h280l-3-43M0 328.500h900" />
      <path d="M354 134c55 37 135 37 191 0M25 54c7 0 12-2 16-7M874 54c-8 0-14-2-18-7" />
      <ellipse cx="451" cy="331" rx="127" ry="75" />
    </PitchLines>
    <Overlay>
      <Requirements>
        <Requirement $drop={3} $w={66}>
          Requisitos
          <Inline><Progress />0/2 <Caret /></Inline>
        </Requirement>
        <Requirement $drop={5} $w={62} $gap={2}>
          Val.
          <Inline><Stars><Star /><Star /><Star /><Star /><Star /></Stars>0</Inline>
        </Requirement>
        <Requirement $drop={0} $w={40}>
          Química
          <ChemistryValue>0/33 <Caret /></ChemistryValue>
        </Requirement>
      </Requirements>
      <Prices>
        <Price $w={29}><Coin />0</Price>
        <Price $w={37}><Coin />0</Price>
        <Price $w={54}><Coin />0</Price>
        <Price $w={28}><Coin />0</Price>
      </Prices>
    </Overlay>
    {slots.map((s, i) => (
      <Slot key={i} $x={s.x} $y={s.y}>
        <SlotCard open={s.open} />
        <Position>{s.pos}</Position>
      </Slot>
    ))}
    <Corner $side="left"><FaWrench size={10} />Área trab.</Corner>
    <Corner $side="right">Enviar <svg width="9" height="8" viewBox="0 0 9 8" fill="currentColor"><path d="M4.500 0 9 8H0z" /></svg></Corner>
  </Pitch>
);

const ActionPanel = () => (
  <Panel>
    <PanelEdge />
    <Actions>
      <Action $kind="disabled" disabled>Intercambiar futbolistas<ActionHint>[KeyS]</ActionHint></Action>
      <Action $kind="primary">Utilizar Creador de plantillas<ActionHint>[KeyB]</ActionHint></Action>
      <SplitRow>
        <SmartBuilder $kind="primary">Creador Inteligente<HandCursor /></SmartBuilder>
        <EditButton $kind="primary">Editar</EditButton>
      </SplitRow>
      <Action $kind="disabled" disabled>DCP - Ejecutar Plantilla<ActionHint>[KeyT]</ActionHint></Action>
      <Action $kind="disabled" disabled>Quitar plantilla<ActionHint>[KeyC]</ActionHint></Action>
      {plainActions.map((a) => (
        <Action key={a.label} $kind="plain">{a.label}<ActionHint>{a.hint}</ActionHint></Action>
      ))}
    </Actions>
    <ScrollRail />
  </Panel>
);

export default function App() {
  return (
    <Screen>
      <GlobalStyle />
      <Browser>
        <Chrome />
        <WebApp>
          <Sidebar>
            {navItems.map((n) => (
              <NavItem key={n.label} href="#" $active={n.active}>
                <NavIcon>{n.icon}</NavIcon>
                {n.label}
                {n.active && <ActiveBar />}
                {n.dot && <Dot />}
              </NavItem>
            ))}
            <NavItem href="#" $last><NavIcon><FaCog size={16} /></NavIcon>Ajustes</NavItem>
          </Sidebar>
          <Main>
            <TopBar />
            <Body>
              <PitchView />
              <ActionPanel />
            </Body>
          </Main>
        </WebApp>
      </Browser>
    </Screen>
  );
}
